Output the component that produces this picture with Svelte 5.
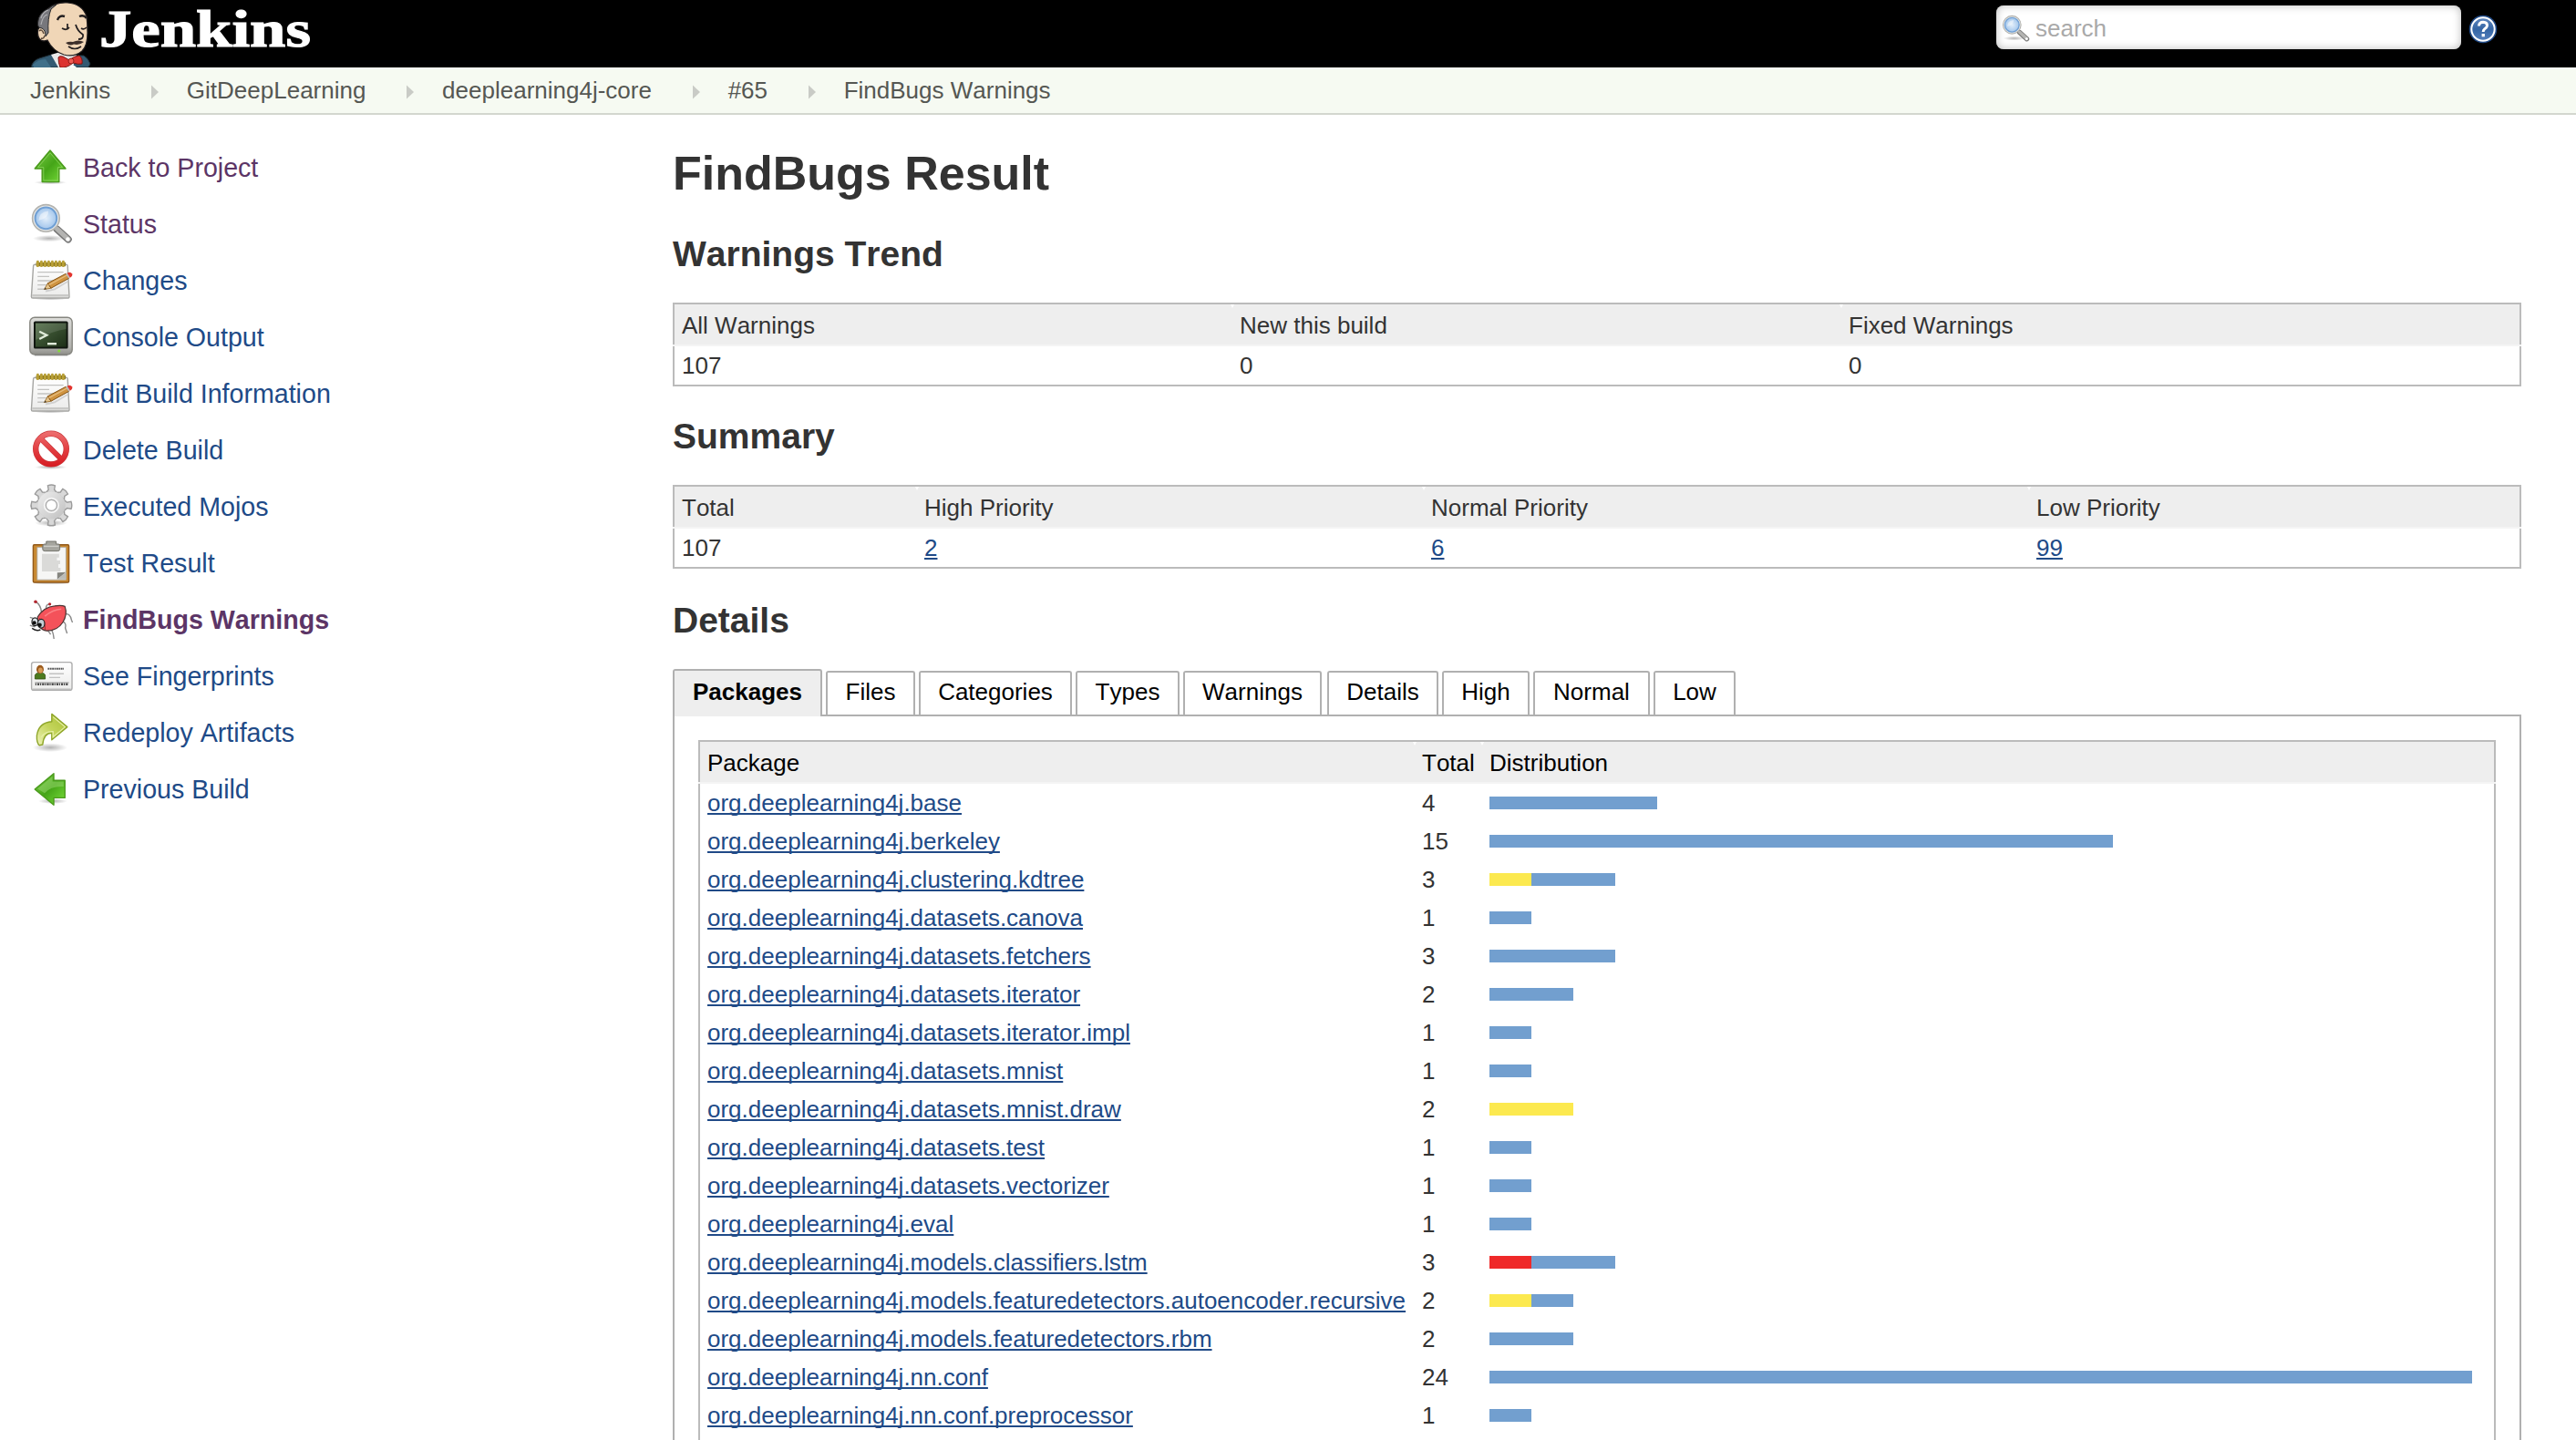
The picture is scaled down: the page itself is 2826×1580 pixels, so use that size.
<script>
  const crumbs = ['Jenkins', 'GitDeepLearning', 'deeplearning4j-core', '#65', 'FindBugs Warnings'];

  const tasks = [
    { icon: 'up', label: 'Back to Project', visited: true },
    { icon: 'search', label: 'Status', visited: true },
    { icon: 'notepad', label: 'Changes' },
    { icon: 'terminal', label: 'Console Output' },
    { icon: 'notepad', label: 'Edit Build Information' },
    { icon: 'delete', label: 'Delete Build' },
    { icon: 'gear', label: 'Executed Mojos' },
    { icon: 'clipboard', label: 'Test Result' },
    { icon: 'bug', label: 'FindBugs Warnings', visited: true, current: true },
    { icon: 'card', label: 'See Fingerprints' },
    { icon: 'redo', label: 'Redeploy Artifacts' },
    { icon: 'previous', label: 'Previous Build' }
  ];

  const tabs = ['Packages', 'Files', 'Categories', 'Types', 'Warnings', 'Details', 'High', 'Normal', 'Low'];

  // Each bar is a list of [priority, width] segments.
  const packages = [
    { name: 'base', total: 4, bar: [['low', 184]] },
    { name: 'berkeley', total: 15, bar: [['low', 684]] },
    { name: 'clustering.kdtree', total: 3, bar: [['normal', 46], ['low', 92]] },
    { name: 'datasets.canova', total: 1, bar: [['low', 46]] },
    { name: 'datasets.fetchers', total: 3, bar: [['low', 138]] },
    { name: 'datasets.iterator', total: 2, bar: [['low', 92]] },
    { name: 'datasets.iterator.impl', total: 1, bar: [['low', 46]] },
    { name: 'datasets.mnist', total: 1, bar: [['low', 46]] },
    { name: 'datasets.mnist.draw', total: 2, bar: [['normal', 92]] },
    { name: 'datasets.test', total: 1, bar: [['low', 46]] },
    { name: 'datasets.vectorizer', total: 1, bar: [['low', 46]] },
    { name: 'eval', total: 1, bar: [['low', 46]] },
    { name: 'models.classifiers.lstm', total: 3, bar: [['high', 46], ['low', 92]] },
    { name: 'models.featuredetectors.autoencoder.recursive', total: 2, bar: [['normal', 46], ['low', 46]] },
    { name: 'models.featuredetectors.rbm', total: 2, bar: [['low', 92]] },
    { name: 'nn.conf', total: 24, bar: [['low', 1078]] },
    { name: 'nn.conf.preprocessor', total: 1, bar: [['low', 46]] }
  ];
</script>

{#snippet magnifier()}
  <ellipse cx="11" cy="20.3" rx="9" ry="1.8" fill="url(#shade)" />
  <path d="M15.2 15.2L21.4 20.8" stroke="#777" stroke-width="4" stroke-linecap="round" />
  <path d="M15.4 15.2L21.4 20.7" stroke="#b4b4b2" stroke-width="2.6" stroke-linecap="round" />
  <circle cx="21.2" cy="20.7" r="1.1" fill="#fff" />
  <circle cx="9.2" cy="9.2" r="7.4" fill="#e9e9e7" stroke="#b3b3af" stroke-width="0.8" />
  <circle cx="9.2" cy="9.2" r="5.9" fill="url(#lens)" stroke="#6f9fd4" stroke-width="1" />
  <path d="M5.2 10.5Q5.6 5.6 10.5 5.2Q11 9 5.2 10.5Z" fill="#fff" opacity="0.45" />
{/snippet}

{#snippet icon(name)}
  <svg class="icon" viewBox="0 0 24 24" aria-hidden="true">
    {#if name === 'up'}
      <ellipse cx="11.7" cy="20.6" rx="9" ry="1.1" fill="url(#shade)" />
      <path d="M11.5 3L20 13H16.4V20.3H7.1V13H3.1Z" fill="url(#green)" stroke="#4a9a1c" stroke-width="0.7" stroke-linejoin="round" />
      <path d="M11.5 4.4L18.3 12.3H15.7V19.5H7.9V12.3H4.8Z" fill="none" stroke="#8fd661" stroke-width="0.5" opacity="0.8" />
    {:else if name === 'search'}
      {@render magnifier()}
    {:else if name === 'notepad'}
      <ellipse cx="11.7" cy="22.3" rx="9.5" ry="1" fill="url(#shade)" />
      <path d="M3.2 3.6H20.3Q21 3.6 21.1 4.4L22 21.2Q22 22 21 22H2Q1.2 22 1.2 21.2L2.3 4.4Q2.4 3.6 3.2 3.6Z" fill="url(#paper)" stroke="#a5a5a2" stroke-width="0.7" />
      <path d="M1.6 20.6H21.6" stroke="#c9c9c7" stroke-width="1.2" />
      <rect x="3.8" y="2.4" width="16.2" height="2.2" fill="#8e7a22" />
      {#each [4, 6, 8, 10, 12, 14, 16, 18] as x}
        <rect x={x} y="1.4" width="1.4" height="3.6" rx="0.6" fill="#b89f35" />
      {/each}
      <path d="M4.6 7.8H18.8M4.6 10.2H11M4.6 12.5H16M4.6 14.8H10M4.6 17.1H8" stroke="#c3c3c1" stroke-width="0.7" />
      <path d="M9 18.2L14 17.2L21 13" stroke="#bbb" stroke-width="1" opacity="0.6" fill="none" />
      <path d="M8.2 17.3L10.3 13.8L12 16.6Z" fill="#e6c58c" stroke="#8a5a14" stroke-width="0.4" />
      <path d="M10.2 13.9L20.2 8.6L21.8 11.2L12 16.6Z" fill="#cf9340" stroke="#85561a" stroke-width="0.5" />
      <path d="M10.8 14.8L20.7 9.5" stroke="#e5bd7e" stroke-width="0.7" />
      <path d="M20 8.7L21.6 11.3L22.4 10.9L20.9 8.2Z" fill="#bdbdb9" />
      <path d="M20.9 8.2L22.4 10.9Q24 9.9 23.6 8.8Q22.7 7.4 20.9 8.2Z" fill="#e3352f" />
      <path d="M8.2 17.3L8.8 16.2L9.5 17.1Z" fill="#333" />
    {:else if name === 'terminal'}
      <rect x="0.4" y="1.6" width="23.2" height="20.4" rx="2.6" fill="url(#metal)" stroke="#85857f" stroke-width="0.7" />
      <path d="M3 22.4H21" stroke="#777" stroke-width="0.5" />
      <rect x="2.5" y="3.8" width="18.8" height="15" rx="0.8" fill="#111710" />
      <rect x="3.5" y="4.8" width="16.8" height="13" fill="url(#screen)" />
      <path d="M3.5 4.8H20.3V8Q13 9 3.5 14Z" fill="#fff" opacity="0.12" />
      <path d="M5.6 9.4L9.6 11.4L5.6 13.5" fill="none" stroke="#e0ecda" stroke-width="1.2" />
      <path d="M10 16.1H15" stroke="#e0ecda" stroke-width="1.2" />
      <circle cx="16.4" cy="20" r="0.8" fill="#85d83a" />
    {:else if name === 'delete'}
      <ellipse cx="11.8" cy="21.8" rx="9" ry="1.2" fill="url(#shade)" />
      <circle cx="12" cy="11.8" r="8.4" fill="#fff" stroke="#c8363a" stroke-width="3.2" />
      <path d="M6.2 6L17.8 17.6" stroke="#c8363a" stroke-width="3" />
      <circle cx="12" cy="11.8" r="8.4" fill="none" stroke="url(#red)" stroke-width="2.6" />
      <path d="M6.2 6L17.8 17.6" stroke="url(#red)" stroke-width="2.4" />
    {:else if name === 'gear'}
      <ellipse cx="12" cy="21.4" rx="9" ry="1.8" fill="url(#shade)" />
      <g transform="translate(12.2 11.7)">
        {#each [0, 45, 90, 135, 180, 225, 270, 315] as angle}
          <path d="M-2.9 -7L-1.6 -8.6L-2 -10.8Q0 -11.6 2 -10.8L1.6 -8.6L2.9 -7Z" transform="rotate({angle})" fill="#d8d8d8" stroke="#9b9b9b" stroke-width="0.7" />
        {/each}
        <circle r="7.6" fill="url(#metal2)" />
        <circle r="3.9" fill="none" stroke="#f6f6f6" stroke-width="0.8" />
        <circle r="3" fill="#fff" stroke="#a8a8a8" stroke-width="0.6" />
      </g>
    {:else if name === 'clipboard'}
      <ellipse cx="12" cy="23.3" rx="9.5" ry="0.6" fill="#ccc" />
      <rect x="2.2" y="2.4" width="19.6" height="20.6" rx="0.6" fill="#c98a33" stroke="#92591a" stroke-width="0.7" />
      <path d="M4.4 3.8H20.2V21.6H4.4Z" fill="#f6f6f5" stroke="#aaa69d" stroke-width="0.4" />
      <path d="M7 7.4H16.4V9.4H15.2V11H17V13H16V15H17.2V17H7Z" fill="#dadad8" />
      <path d="M15.4 21.4V17.6L20.2 17.4Z" fill="#85857f" />
      <path d="M15.4 21.4L20.2 17.4V21.4Z" fill="#bcbcb8" />
      <path d="M9.4 0.5H14.8V2H16Q16.8 2 16.8 3V4.8Q16.8 5.8 15.6 5.8H8.6Q7.4 5.8 7.4 4.8V3Q7.4 2 8.4 2H9.4Z" fill="#a5a59e" stroke="#73736b" stroke-width="0.5" />
      <path d="M8 3.2H16.2" stroke="#cecec8" stroke-width="0.7" />
    {:else if name === 'bug'}
      <path d="M6.8 8.6Q6.4 4.4 3.6 2.6M9.6 7.6Q8.6 4.4 11 3.8M19.6 9.4Q22.4 8.8 23.2 12.6L23.8 14M18 13.4Q20.6 14 19.8 17L20.8 20M12.4 18L13.2 20.4L13.6 23M9.6 17.6L11.8 20.6M2.6 11.8L0.4 11.2M3.2 16.4L0.4 15.6" fill="none" stroke="#8a8a8a" stroke-width="0.7" />
      <circle cx="3.5" cy="2.6" r="0.9" fill="#b3262f" />
      <circle cx="11.3" cy="3.9" r="0.8" fill="#b3262f" />
      <path d="M4.6 11Q8 5.4 14 4.9Q18 4.4 19.6 5.2Q21.2 9.6 18.4 14Q15.4 18.6 9.6 18.6Q4.4 17.8 4.6 11Z" fill="#f4525a" stroke="#4a3433" stroke-width="0.6" />
      <path d="M5.4 11.6Q9 13.6 8.8 18" fill="none" stroke="#8c2a2e" stroke-width="0.4" />
      <path d="M8.6 10.6Q13 6.8 17.6 6.6" stroke="#fb8185" stroke-width="0.8" fill="none" />
      <ellipse cx="3.2" cy="13.6" rx="1.7" ry="2.2" fill="#dfe5ea" stroke="#222" stroke-width="0.6" />
      <ellipse cx="6.6" cy="14.6" rx="1.9" ry="2.4" fill="#c3ced6" stroke="#222" stroke-width="0.6" />
      <circle cx="2.8" cy="14.2" r="1.1" fill="#111" />
      <circle cx="5.8" cy="15.4" r="1.1" fill="#111" />
      <path d="M1.6 17.2Q3.8 19 6.2 18" fill="none" stroke="#222" stroke-width="0.7" />
    {:else if name === 'card'}
      <rect x="1.3" y="4.8" width="22.2" height="15.4" rx="1.2" fill="url(#paper)" stroke="#adadad" stroke-width="0.7" />
      <path d="M2 19.7H22.8" stroke="#bbb" stroke-width="0.8" />
      <path d="M3.2 14V12.2Q3.2 10.6 6 10.6Q8.8 10.6 8.8 12.2V14Z" fill="#4c7a1e" stroke="#2f4f10" stroke-width="0.4" />
      <ellipse cx="6" cy="8.7" rx="2" ry="2.3" fill="#9b5a1c" />
      <ellipse cx="6.2" cy="9.3" rx="1.2" ry="1.5" fill="#d79b58" />
      <path d="M10.2 8.4H19" stroke="#555" stroke-width="1" stroke-dasharray="0.9 0.3" />
      <path d="M11 11.1H19M11 13.2H17" stroke="#c2c2c2" stroke-width="0.7" />
      <path d="M3.2 16H21.8" stroke="#999" stroke-width="0.6" />
      <path d="M3.4 16.9H21.6" stroke="#4a4a4a" stroke-width="1.2" stroke-dasharray="0.6 0.5 1.1 0.4" />
    {:else if name === 'redo'}
      <ellipse cx="11.5" cy="20.6" rx="9.5" ry="2.4" fill="url(#shade)" />
      <path d="M12.4 2.2L20.9 9.3L12.4 16.4V12.6Q8 12.6 7.4 19L5.6 19.4Q4 18 4.2 14Q5.2 7 12.4 6.4Z" fill="url(#lime)" stroke="#8fa62a" stroke-width="0.7" stroke-linejoin="round" />
      <path d="M13.1 3.8L19.7 9.3L13.1 14.8V11.8Q8.6 11.6 6.6 15" fill="none" stroke="#e6efa5" stroke-width="0.6" />
    {:else if name === 'previous'}
      <ellipse cx="13" cy="19" rx="8" ry="1.5" fill="url(#shade)" />
      <path d="M3.1 12.5L13.5 3.9V7.6H19.6V17.2H13.5V21.1Z" fill="url(#green)" stroke="#4a9a1c" stroke-width="0.7" stroke-linejoin="round" />
      <path d="M4.6 12.2L12.8 5.4V8.3H18.9V11Q12 10.6 8.5 14.6Z" fill="#a4de7d" opacity="0.45" />
    {/if}
  </svg>
{/snippet}

{#snippet head(labels)}
  <div class="row head">
    {#each labels as label}<span class="cell">{label}</span>{/each}
  </div>
{/snippet}

<svg class="defs" aria-hidden="true">
  <defs>
    <linearGradient id="green" x1="0" y1="0" x2="1" y2="1">
      <stop offset="0" stop-color="#7ccb48" /><stop offset="0.5" stop-color="#45a518" /><stop offset="1" stop-color="#7be03c" />
    </linearGradient>
    <linearGradient id="lime" x1="0" y1="1" x2="1" y2="0">
      <stop offset="0" stop-color="#eef3b9" /><stop offset="0.5" stop-color="#c3d45a" /><stop offset="1" stop-color="#a9bf35" />
    </linearGradient>
    <linearGradient id="red" x1="0" y1="0" x2="0" y2="24" gradientUnits="userSpaceOnUse">
      <stop offset="0" stop-color="#f07a7a" /><stop offset="0.5" stop-color="#e23f42" /><stop offset="1" stop-color="#d31219" />
    </linearGradient>
    <linearGradient id="paper" x1="0" y1="0" x2="0" y2="1">
      <stop offset="0" stop-color="#fff" /><stop offset="1" stop-color="#ebebea" />
    </linearGradient>
    <linearGradient id="metal" x1="0" y1="0" x2="0" y2="1">
      <stop offset="0" stop-color="#dcdcd9" /><stop offset="0.8" stop-color="#b2b2ae" /><stop offset="1" stop-color="#8f8f8a" />
    </linearGradient>
    <linearGradient id="metal2" x1="0" y1="0" x2="1" y2="1">
      <stop offset="0" stop-color="#eee" /><stop offset="1" stop-color="#c0c0c0" />
    </linearGradient>
    <linearGradient id="screen" x1="0" y1="0" x2="1" y2="1">
      <stop offset="0" stop-color="#4f6b45" /><stop offset="1" stop-color="#1d2f17" />
    </linearGradient>
    <linearGradient id="help" x1="0" y1="0" x2="0" y2="1">
      <stop offset="0" stop-color="#6088c0" /><stop offset="0.5" stop-color="#3465a4" /><stop offset="1" stop-color="#5580bd" />
    </linearGradient>
    <radialGradient id="lens">
      <stop offset="0" stop-color="#e3effb" /><stop offset="1" stop-color="#a3c6ec" />
    </radialGradient>
    <radialGradient id="shade">
      <stop offset="0" stop-color="#000" stop-opacity="0.3" /><stop offset="1" stop-color="#000" stop-opacity="0" />
    </radialGradient>
  </defs>
</svg>

<header class="top">
  <svg class="logo" viewBox="0 0 350 74" role="img" aria-label="Jenkins">
    <path d="M34 74Q36 66 43 64L56 60L92 61Q97 64 99 70L97 74Z" fill="#335a72" stroke="#1d2b33" stroke-width="1" />
    <path d="M36 71Q42 65 50 65L56 74H37Z" fill="#41708a" />
    <path d="M56 60L66 57L84 60L80 74H64Z" fill="#e9e9e9" />
    <path d="M52 10Q61 2 74 3Q90 4 95 18Q96 26 96 36Q96 50 90 56Q82 63 70 60Q58 56 52 44Q45 47 42 40Q40 30 45 30Q40 20 52 10Z" fill="#f0d6b7" stroke="#231f20" stroke-width="1.2" />
    <path d="M54 9Q42 14 41.5 25Q41 31 46 31Q50 33 50 40L53 36Q52 20 56 10L62 5Q57 6 54 9Z" fill="#77777c" stroke="#29292b" stroke-width="1" />
    <path d="M45 20Q47 13 53 11M45 27Q47 17 52 16" stroke="#b0b0b3" stroke-width="1.2" fill="none" />
    <path d="M43 34Q46 31 48 37M45 42Q48 43 49 39" fill="none" stroke="#5a4637" stroke-width="1.4" />
    <path d="M63 22Q65 16 71 18M87 18Q92 16 95 20" fill="none" stroke="#231f20" stroke-width="2.4" />
    <path d="M68 31Q73 34 76 30M74 26V32M89 31Q92 33 95 30" fill="none" stroke="#231f20" stroke-width="1.7" />
    <path d="M83 27Q85 34 91 38Q92 43 86 43" fill="none" stroke="#231f20" stroke-width="1.8" />
    <path d="M72 47Q76 45 80 46Q86 43 92 46Q87 50 81 48.5Q76 51 72 47Z" fill="#3d302b" />
    <path d="M75 51Q82 56 89 51" fill="none" stroke="#231f20" stroke-width="1.6" />
    <path d="M64 63Q65 61 69 62L76 66Q82 61 87 61Q91 64 90 70Q86 71 80 69Q73 75 66 74Q64 69 64 63Z" fill="#dc3330" stroke="#7e1512" stroke-width="1" />
    <circle cx="78" cy="67" r="3" fill="#ef5a52" stroke="#7e1512" stroke-width="0.8" />
    <path d="M76 74Q80 69 84 74Z" fill="#fff" />
    <text x="109" y="51" textLength="232" lengthAdjust="spacingAndGlyphs">Jenkins</text>
  </svg>
  <div class="search">
    <svg class="glass" viewBox="0 0 24 24" aria-hidden="true">{@render magnifier()}</svg>
    <span>search</span>
  </div>
  <svg class="help" viewBox="0 0 32 32" aria-hidden="true">
    <circle cx="16" cy="16" r="15.3" fill="#204a87" />
    <circle cx="16" cy="16" r="12.7" fill="url(#help)" stroke="#fff" stroke-width="2" />
    <path d="M11.5 12.5Q11.8 8.3 16.2 8.3Q20.7 8.6 20.5 12.2Q20.3 14.2 17.8 15.7Q16.2 16.8 16.2 19" fill="none" stroke="#fff" stroke-width="3" />
    <rect x="14.6" y="21" width="3.3" height="3.3" fill="#fff" />
  </svg>
</header>

<nav class="crumbs">
  {#each crumbs as crumb, i}
    {#if i > 0}
      <svg class="sep" viewBox="0 0 8 16" aria-hidden="true"><path d="M0 0.5L8 8L0 15.5Z" /></svg>
    {/if}
    <a>{crumb}</a>
  {/each}
</nav>

<div class="page">
  <aside>
    {#each tasks as task}
      <a class="task" class:visited={task.visited} class:current={task.current}>
        {@render icon(task.icon)}
        <span>{task.label}</span>
      </a>
    {/each}
  </aside>

  <main>
    <h1>FindBugs Result</h1>

    <h2>Warnings Trend</h2>
    <div class="table trend">
      {@render head(['All Warnings', 'New this build', 'Fixed Warnings'])}
      <div class="body">
        <div class="row"><span class="cell">107</span><span class="cell">0</span><span class="cell">0</span></div>
      </div>
    </div>

    <h2>Summary</h2>
    <div class="table summary">
      {@render head(['Total', 'High Priority', 'Normal Priority', 'Low Priority'])}
      <div class="body">
        <div class="row">
          <span class="cell">107</span>
          <span class="cell"><a class="link">2</a></span>
          <span class="cell"><a class="link">6</a></span>
          <span class="cell"><a class="link">99</a></span>
        </div>
      </div>
    </div>

    <h2 class="details">Details</h2>
    <div class="tabs">
      {#each tabs as tab, i}
        <a class="tab" class:selected={i === 0}>{tab}</a>
      {/each}
    </div>
    <div class="panel">
      <div class="table packages">
        {@render head(['Package', 'Total', 'Distribution'])}
        <div class="body">
          {#each packages as pkg}
            <div class="row">
              <span class="cell"><a class="link">org.deeplearning4j.{pkg.name}</a></span>
              <span class="cell">{pkg.total}</span>
              <span class="cell bar">
                {#each pkg.bar as [priority, width]}
                  <i class={priority} style="width: {width}px"></i>
                {/each}
              </span>
            </div>
          {/each}
        </div>
      </div>
    </div>
  </main>
</div>

<style>
  :global(body) {
    margin: 0;
    background: #fff;
    overflow: hidden;
  }
  :global(#app) {
    height: 1580px;
    overflow: hidden;
    font: 26px/42px 'Liberation Sans', Helvetica, Arial, sans-serif;
    font-kerning: none;
    color: #333;
  }
  .defs {
    display: block;
    width: 0;
    height: 0;
  }

  .top {
    display: flex;
    align-items: flex-start;
    height: 74px;
    background: #000;
  }
  .logo {
    width: 350px;
    height: 74px;
    margin-right: auto;
  }
  .logo text {
    font: bold 57px 'Liberation Serif', Georgia, serif;
    fill: #fff;
    stroke: #fff;
    stroke-width: 1.2px;
  }
  .search {
    display: flex;
    align-items: center;
    box-sizing: border-box;
    width: 510px;
    height: 48px;
    margin-top: 6px;
    padding-left: 5px;
    gap: 6px;
    border-radius: 8px;
    background: #fff;
    box-shadow: inset 0 0 10px #bbb;
    color: #a9a9a9;
  }
  .search span {
    padding-top: 2px;
  }
  .glass {
    width: 32px;
    height: 32px;
    margin-top: 1px;
  }
  .help {
    width: 32px;
    height: 32px;
    margin: 16px 86px 0 8px;
  }

  .crumbs {
    display: flex;
    align-items: center;
    height: 50px;
    padding-left: 33px;
    border-bottom: 2px solid #d3d7cf;
    background: #f6faf2;
    color: #555753;
    line-height: 50px;
    white-space: nowrap;
  }
  .sep {
    width: 8px;
    height: 16px;
    margin: 4px 30.7px 0 45px;
    fill: #c9cbc6;
  }

  .page {
    display: flex;
  }
  aside {
    flex: none;
    width: 706px;
    padding: 26px 0 0 32px;
  }
  .task {
    display: flex;
    align-items: center;
    height: 62px;
    gap: 11px;
    color: #204a87;
    font-size: 28.6px;
    line-height: 62px;
  }
  .icon {
    width: 48px;
    height: 48px;
  }
  .task span {
    padding-top: 1px;
  }
  .visited {
    color: #5c3566;
  }
  .current {
    font-weight: bold;
  }

  main {
    flex: none;
    width: 2028px;
  }
  h1 {
    margin: 34px 0 35px;
    font-size: 52px;
    line-height: 60px;
  }
  h2 {
    margin: 32px 0 30px;
    font-size: 39px;
    line-height: 46px;
  }
  h1 + h2 {
    margin-top: 36px;
  }
  h2.details {
    margin-top: 34px;
  }

  .trend {
    --columns: 612px 668px 1fr;
  }
  .summary {
    --columns: 266px 556px 664px 1fr;
  }
  .packages {
    --columns: 784px 74px 1fr;
  }
  .row {
    display: grid;
    grid-template-columns: var(--columns);
    height: 42px;
    white-space: nowrap;
  }
  .cell {
    position: relative;
    padding-left: 8px;
  }
  .head {
    height: 42px;
    padding-top: 2px;
    border: 2px solid #bbb;
    border-bottom: 0;
    background: #eee;
  }
  .head .cell + .cell::before {
    content: '';
    position: absolute;
    top: -2px;
    left: -2px;
    width: 4px;
    height: 4px;
    background: #fff;
    clip-path: polygon(0 0, 100% 0, 50% 100%);
  }
  .body {
    border: 2px solid #bbb;
    border-top: 0;
  }
  .body::before {
    content: '';
    display: block;
    height: 2px;
    margin: 0 -2px;
    background: #f4f4f4;
  }
  .packages .head {
    color: #000;
  }
  /* The list runs on below the fold. */
  .packages .body {
    padding-bottom: 42px;
  }
  .link {
    color: #204a87;
    text-decoration: underline;
    text-decoration-thickness: 2px;
    text-underline-offset: 2px;
    text-decoration-skip-ink: none;
  }
  .bar {
    display: flex;
    align-items: center;
  }
  .bar i {
    height: 14px;
  }
  .low {
    background: #729fcf;
  }
  .normal {
    background: #fce94f;
  }
  .high {
    background: #ef2929;
  }

  .tabs {
    display: grid;
    grid-template-columns: 164px 98px 168px 114px 154px 122px 96px 128px 90px;
    column-gap: 4px;
    align-items: end;
    height: 50px;
  }
  .tab {
    box-sizing: border-box;
    height: 48px;
    border: 2px solid #b0b0b0;
    border-bottom: 0;
    border-radius: 3px 3px 0 0;
    background: #fff;
    color: #000;
    line-height: 42px;
    text-align: center;
  }
  .tab:nth-child(5) {
    margin-right: 2px;
  }
  .selected {
    position: relative;
    height: 52px;
    margin-bottom: -2px;
    background: #eee;
    font-weight: bold;
    line-height: 46px;
  }
  .panel {
    padding: 26px;
    border: 2px solid #b0b0b0;
  }
</style>
